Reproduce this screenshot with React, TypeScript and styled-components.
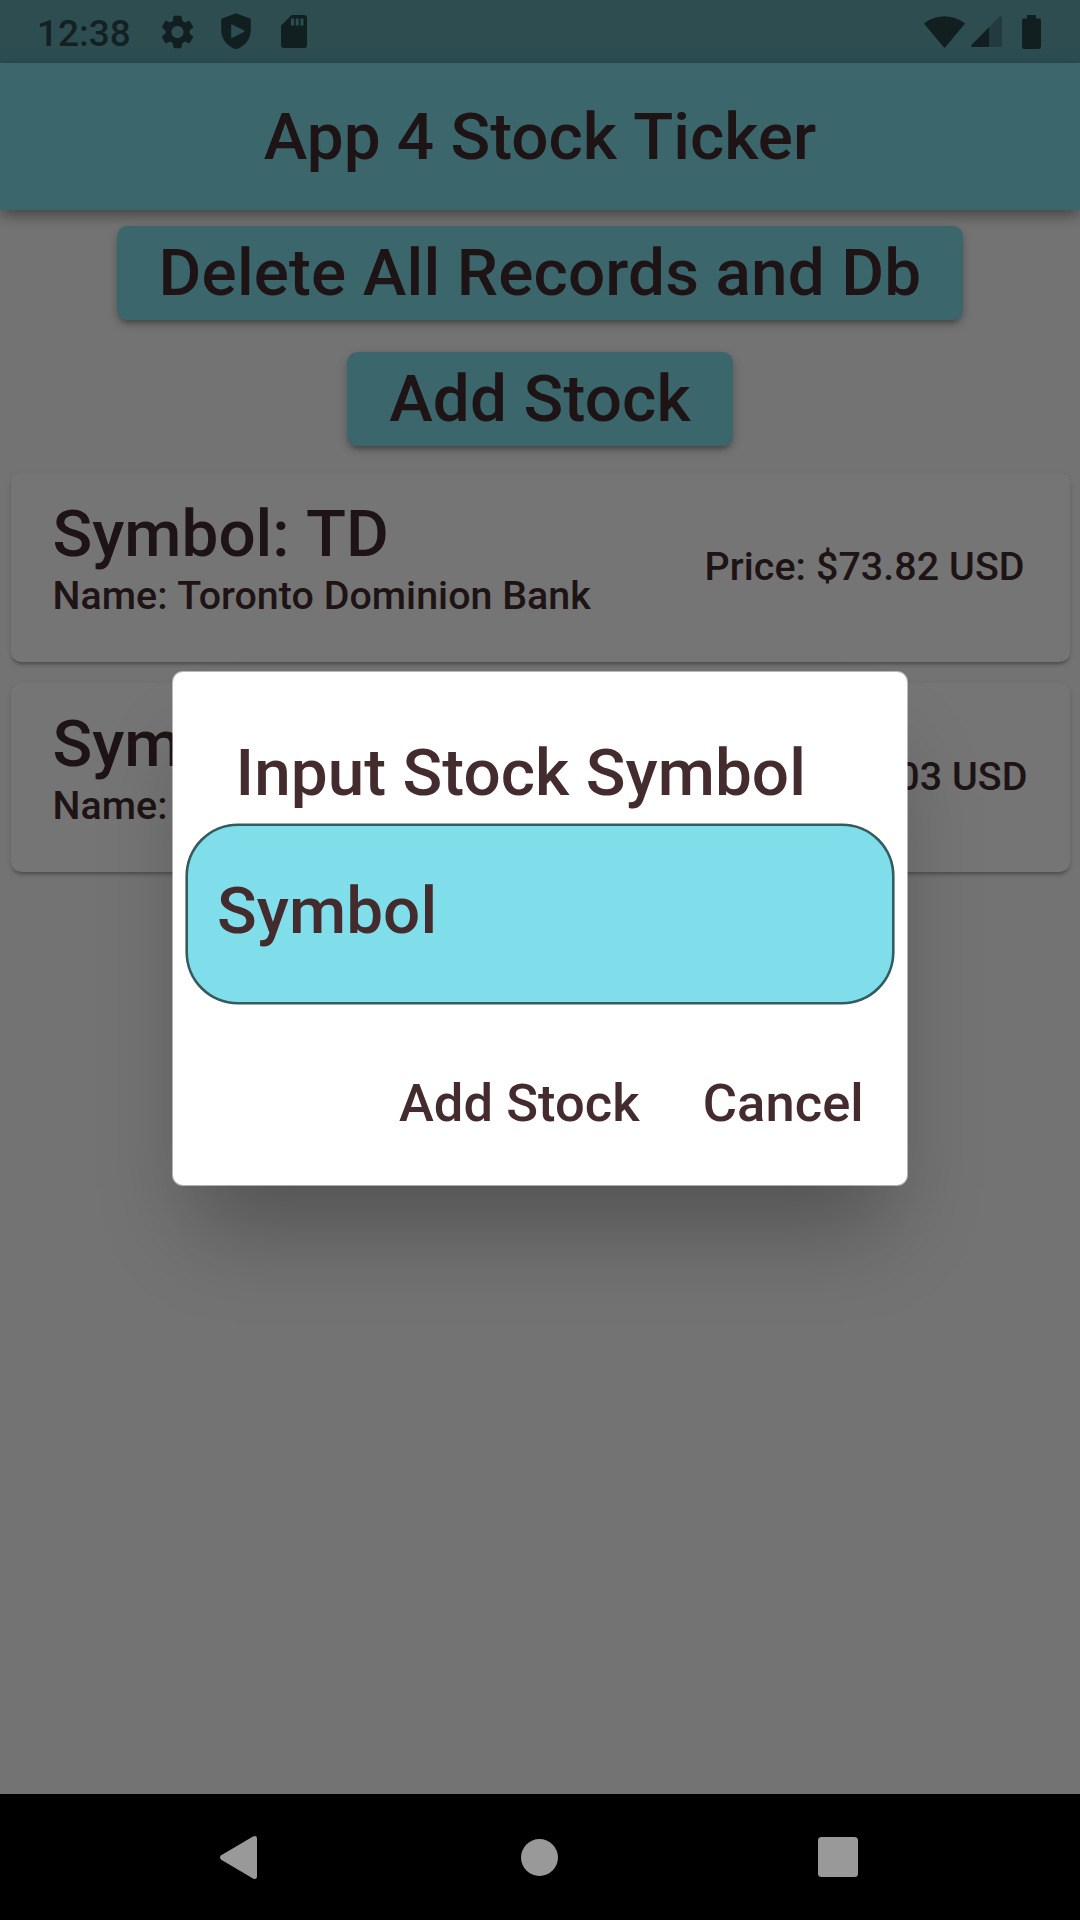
import React from "react";
import styled, { createGlobalStyle } from "styled-components";

const GlobalStyle = createGlobalStyle`
  html, body { margin: 0; padding: 0; background: #000; }
  * { box-sizing: border-box; }
`;

const Screen = styled.div`
  position: relative;
  display: flex;
  flex-direction: column;
  width: 1080px;
  height: 1920px;
  overflow: hidden;
  background: #fafafa;
  color: #442c2e;
  font-family: Roboto, "Noto Sans", sans-serif;
  font-weight: 500;
`;

const StatusBar = styled.header`
  display: flex;
  align-items: center;
  flex: none;
  height: 63px;
  padding: 0 39px 0 37px;
  background: #62a8b1;
  color: rgba(0, 0, 0, 0.59);
  svg { display: block; flex: none; }
`;

const Clock = styled.span`
  width: 124px;
  font-size: 37px;
  line-height: 62px;
  padding-top: 4px;
`;

const StatusIcons = styled.div`
  display: flex;
  align-items: center;
  gap: 27px;
  svg:last-child { margin-left: 3px; }
`;

const SystemIcons = styled.div`
  display: flex;
  align-items: center;
  margin-left: auto;
`;

const AppBar = styled.div`
  display: flex;
  align-items: center;
  justify-content: center;
  flex: none;
  height: 147px;
  background: #80deea;
  box-shadow: 0 5px 10px -2px rgba(0, 0, 0, 0.22), 0 9px 13px rgba(0, 0, 0, 0.14), 0 2px 18px rgba(0, 0, 0, 0.1);
`;

const Title = styled.h1`
  margin: 0;
  font-size: 65.625px;
  font-weight: 500;
  line-height: 77px;
`;

const Word = styled.span`
  display: inline-block;
  white-space: pre;
`;

const Content = styled.main`
  display: flex;
  flex-direction: column;
  align-items: center;
  flex: 1;
`;

const TapTarget = styled.div`
  display: flex;
  align-items: center;
  height: 126px;
`;

const RaisedButton = styled.button`
  height: 94.5px;
  padding: 0 42px;
  border: 0;
  border-radius: 10.5px;
  background: #80deea;
  color: inherit;
  font: inherit;
  font-size: 65.625px;
  line-height: 94px;
  letter-spacing: 0.16px;
  white-space: nowrap;
  box-shadow: 0 7px 4px -5px rgba(0, 0, 0, 0.18), 0 4px 7px rgba(0, 0, 0, 0.2), 0 3px 12px rgba(0, 0, 0, 0.1);
`;

const StockCard = styled.article`
  display: flex;
  align-items: center;
  justify-content: space-between;
  width: 1059px;
  height: 189px;
  margin: 10.5px;
  padding: 0 42px;
  border-radius: 10.5px;
  background: #fff;
  box-shadow: 0 4px 3px -2px rgba(0, 0, 0, 0.18), 0 3px 4px rgba(0, 0, 0, 0.12), 0 2px 6px rgba(0, 0, 0, 0.06);
`;

const StockInfo = styled.div`
  display: flex;
  flex-direction: column;
  gap: 1px;
  height: 144px;
`;

const StockSymbol = styled.div`
  font-size: 65.625px;
  line-height: 77px;
`;

const SmallText = styled.div`
  font-size: 39.375px;
  line-height: 46px;
  letter-spacing: 0.03px;
`;

const Price = styled(SmallText)`
  min-width: 323px;
  letter-spacing: 0.08px;
`;

const NavBar = styled.nav`
  position: relative;
  z-index: 2;
  display: flex;
  align-items: center;
  justify-content: space-between;
  flex: none;
  height: 126px;
  padding: 0 222px 0 220px;
  background: #000;
  color: #999;
  svg { display: block; }
  svg:nth-child(2) { margin-left: 4px; }
`;

const Scrim = styled.div`
  position: absolute;
  inset: 0 0 126px;
  display: flex;
  align-items: center;
  justify-content: center;
  padding-top: 63px;
  background: rgba(0, 0, 0, 0.54);
`;

const Dialog = styled.section`
  display: flex;
  flex-direction: column;
  width: 734px;
  height: 513px;
  padding: 62.3px 13px 20.2px;
  border-radius: 10px;
  background: #fff;
  box-shadow: 0 0 0 1px rgba(255, 255, 255, 0.5), 0 63px 84px -20px rgba(0, 0, 0, 0.28);
`;

const DialogTitle = styled.h2`
  margin: 0 0 12.7px;
  padding-left: 49.6px;
  font-size: 65.625px;
  font-weight: 500;
  line-height: 77px;
  letter-spacing: 0.06px;
`;

const Field = styled.div`
  display: flex;
  align-items: center;
  flex: none;
  height: 180px;
  padding: 0 29px 7px;
  border: 2px solid #335b60;
  border-radius: 52px;
  background: #80deea;
  box-shadow: 0 0 0 0.6px #335b60;
  font-size: 65.625px;
  line-height: 77px;
  letter-spacing: 0.06px;
`;

const Actions = styled.div`
  display: flex;
  justify-content: flex-end;
  gap: 21px;
  margin-top: auto;
  padding-right: 9.2px;
`;

const TextButton = styled.button`
  height: 126px;
  padding: 2px 21px 0;
  border: 0;
  background: none;
  color: inherit;
  font: inherit;
  font-size: 52.5px;
  letter-spacing: 0.06px;
`;

const stocks = [
  { symbol: "TD", name: "Toronto Dominion Bank", price: "73.82" },
  { symbol: "", name: "", price: "142.03" },
];

const GearIcon = () => (
  <svg width="33" height="34" viewBox="2.2 1.9 19.6 20.2" fill="currentColor">
    <path d="M19.14 12.94c.04-.3.06-.61.06-.94 0-.32-.02-.64-.07-.94l2.03-1.58c.18-.14.23-.41.12-.61l-1.92-3.32c-.12-.22-.37-.29-.59-.22l-2.39.96c-.5-.38-1.03-.7-1.62-.94l-.36-2.54c-.04-.24-.24-.41-.48-.41h-3.84c-.24 0-.43.17-.47.41l-.36 2.54c-.59.24-1.13.57-1.62.94l-2.39-.96c-.22-.08-.47 0-.59.22L2.74 8.87c-.12.21-.08.47.12.61l2.03 1.58c-.05.3-.09.63-.09.94s.02.64.07.94l-2.03 1.58c-.18.14-.23.41-.12.61l1.92 3.32c.12.22.37.29.59.22l2.39-.96c.5.38 1.03.7 1.62.94l.36 2.54c.05.24.24.41.48.41h3.84c.24 0 .44-.17.47-.41l.36-2.54c.59-.24 1.13-.56 1.62-.94l2.39.96c.22.08.47 0 .59-.22l1.92-3.32c.12-.22.07-.47-.12-.61l-2.01-1.58zM12 15.6c-1.98 0-3.6-1.62-3.6-3.6s1.62-3.6 3.6-3.6 3.6 1.62 3.6 3.6-1.62 3.6-3.6 3.6z" />
  </svg>
);

const ShieldIcon = () => (
  <svg width="30" height="37" viewBox="0 0 30 37" fill="currentColor" fillRule="evenodd">
    <path d="M15 .3 29 5.6Q29.8 6 29.8 7V17C29.8 26.500 23.500 33.800 15 36.300 6.500 33.800 .2 26.500 .2 17V7Q.2 6 1 5.600ZM10.200 12V24.300Q10.300 25.200 11.200 24.700L23 19Q24 18.300 23 17.500L11.200 11.500Q10.300 11.100 10.200 12Z" />
  </svg>
);

const SdCardIcon = () => (
  <svg width="26" height="33" viewBox="0 0 26 33" fill="currentColor" fillRule="evenodd">
    <path d="M10.500 0H23Q26 0 26 3V30Q26 33 23 33H3Q0 33 0 30V10.500ZM10 3.500V10.500H13V3.500ZM14.700 3.500V10.500H17.700V3.500ZM19.500 3.500V10.500H22.500V3.500Z" />
  </svg>
);

const WifiIcon = () => (
  <svg width="41" height="32" viewBox="0 0 41 32" fill="currentColor">
    <path d="M.7 8.500Q-.2 7.500 .8 6.700C6.500 2.400 13.300 .2 20.500 .2S34.500 2.400 40.200 6.700Q41.200 7.500 40.300 8.500L21.500 31Q20.500 32 19.500 31Z" />
  </svg>
);

const SignalIcon = () => (
  <svg width="31" height="31" viewBox="0 0 31 31" fill="currentColor">
    <path opacity=".38" d="M18 11.300 28.800.5Q31-.8 31 1.500V29.500Q31 31 29.500 31H18Z" />
    <path d="M18 11.300V31H1.500Q-.8 30.500 .6 28.700Z" />
  </svg>
);

const BatteryIcon = () => (
  <svg width="19" height="34" viewBox="0 0 19 34" fill="currentColor">
    <path d="M5 0H14V3.500H17Q19 3.500 19 5.500V32Q19 34 17 34H2Q0 34 0 32V5.500Q0 3.500 2 3.500H5Z" />
  </svg>
);

const SystemSlot = styled.span<{ $before?: number }>`
  display: block;
  margin-left: ${(p) => p.$before ?? 0}px;
`;

const BackIcon = () => (
  <svg width="37" height="43" viewBox="0 0 37 43" fill="currentColor">
    <path d="M1.200 19.300 33 .6Q37-1 37 2.500V40.500Q37 44 33 42.400L1.200 23.700Q-1.200 21.500 1.200 19.300Z" />
  </svg>
);

const HomeIcon = () => (
  <svg width="37" height="37" viewBox="0 0 37 37" fill="currentColor">
    <circle cx="18.500" cy="18.500" r="18.500" />
  </svg>
);

const RecentsIcon = () => (
  <svg width="40" height="40" viewBox="0 0 40 40" fill="currentColor">
    <rect width="40" height="40" rx="3.500" />
  </svg>
);

export default function App() {
  return (
    <>
      <GlobalStyle />
      <Screen>
        <StatusBar>
          <Clock>12:38</Clock>
          <StatusIcons>
            <GearIcon />
            <ShieldIcon />
            <SdCardIcon />
          </StatusIcons>
          <SystemIcons>
            <SystemSlot>
              <WifiIcon />
            </SystemSlot>
            <SystemSlot $before={6}>
              <SignalIcon />
            </SystemSlot>
            <SystemSlot $before={20}>
              <BatteryIcon />
            </SystemSlot>
          </SystemIcons>
        </StatusBar>
        <AppBar>
          <Title>
            <Word>{"App 4 Stock "}</Word>
            <Word>Ticker</Word>
          </Title>
        </AppBar>
        <Content>
          <TapTarget>
            <RaisedButton>Delete All Records and Db</RaisedButton>
          </TapTarget>
          <TapTarget>
            <RaisedButton>Add Stock</RaisedButton>
          </TapTarget>
          {stocks.map((stock) => (
            <StockCard key={stock.price}>
              <StockInfo>
                <StockSymbol>
                  <Word>{"Symbol: "}</Word>
                  <Word>{stock.symbol}</Word>
                </StockSymbol>
                <SmallText>
                  <Word>{"Name: "}</Word>
                  <Word>{stock.name}</Word>
                </SmallText>
              </StockInfo>
              <Price>Price: ${stock.price} USD</Price>
            </StockCard>
          ))}
        </Content>
        <NavBar>
          <BackIcon />
          <HomeIcon />
          <RecentsIcon />
        </NavBar>
        <Scrim>
          <Dialog>
            <DialogTitle>Input Stock Symbol</DialogTitle>
            <Field>Symbol</Field>
            <Actions>
              <TextButton>Add Stock</TextButton>
              <TextButton>Cancel</TextButton>
            </Actions>
          </Dialog>
        </Scrim>
      </Screen>
    </>
  );
}
